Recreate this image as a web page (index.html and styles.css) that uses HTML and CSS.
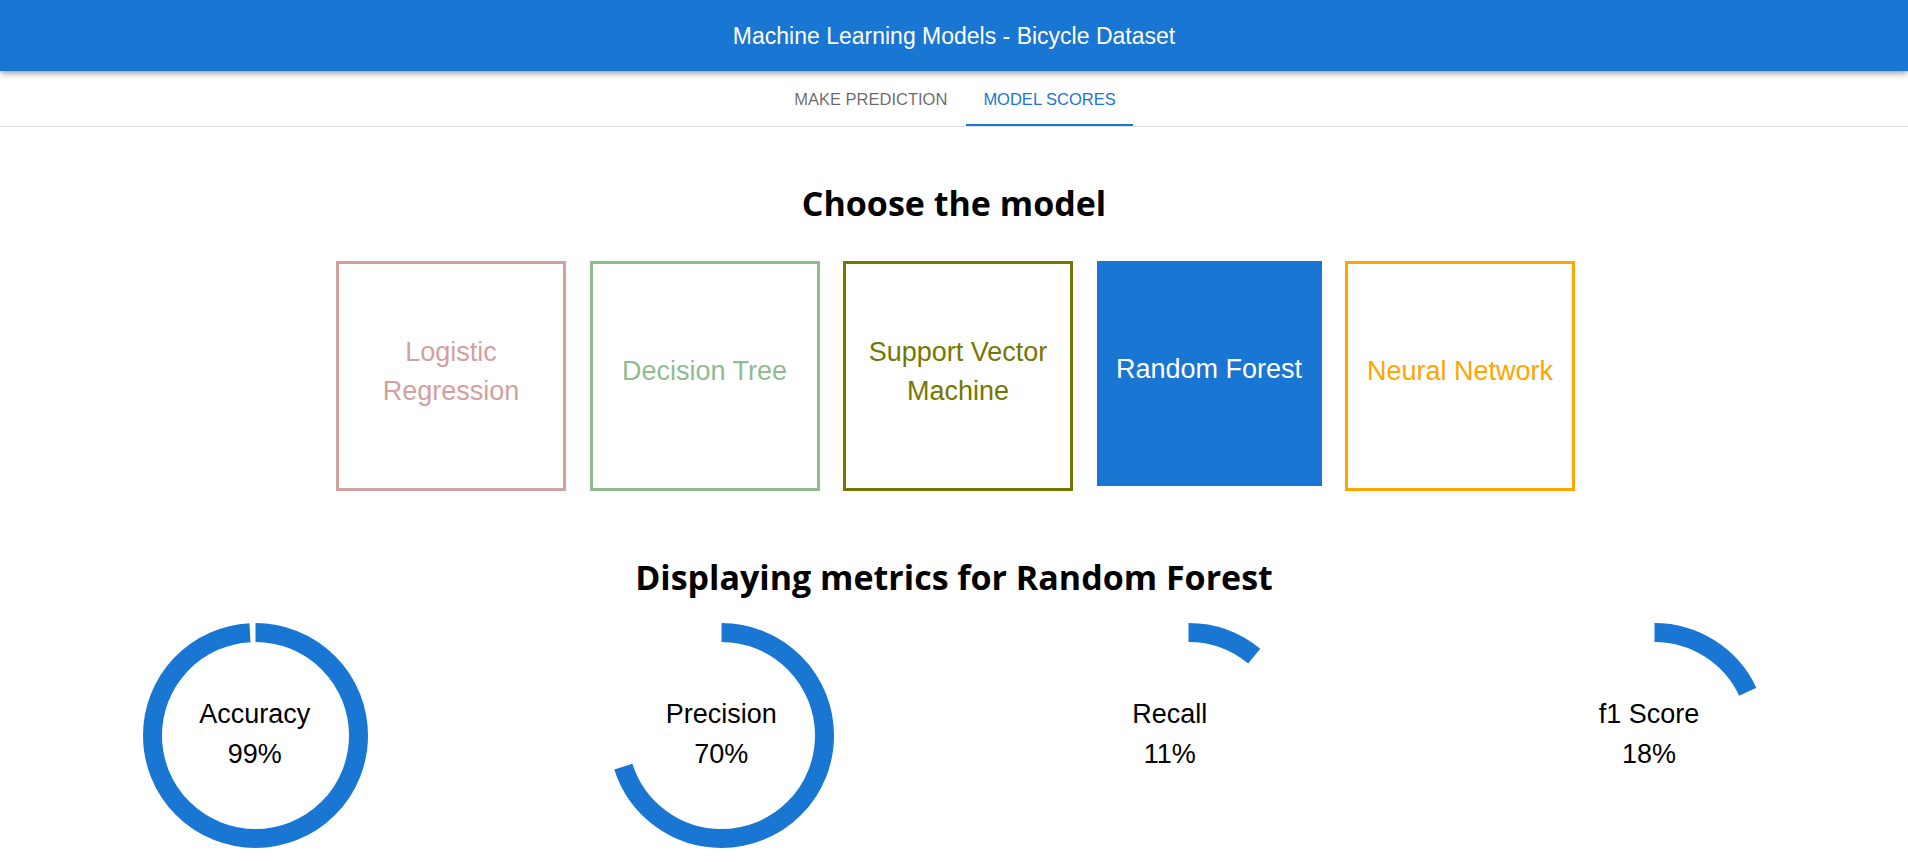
FILE: index.html
```html
<!DOCTYPE html>
<html lang="en">
<head>
<meta charset="utf-8">
<title>Machine Learning Models - Bicycle Dataset</title>
<link rel="stylesheet" href="styles.css">
</head>
<body>
<header class="appbar">
  <div class="appbar-title">Machine Learning Models - Bicycle Dataset</div>
</header>
<nav class="tabs">
  <div class="tab">MAKE PREDICTION</div>
  <div class="tab tab-active">MODEL SCORES</div>
</nav>
<main class="content">
  <h1 class="heading heading-choose">Choose the model</h1>
  <div class="models">
    <div class="model model-logistic">Logistic Regression</div>
    <div class="model model-tree">Decision Tree</div>
    <div class="model model-svm">Support Vector Machine</div>
    <div class="model model-active">Random Forest</div>
    <div class="model model-nn">Neural Network</div>
  </div>
  <h1 class="heading heading-metrics">Displaying metrics for Random Forest</h1>
  <div class="metrics">
    <div class="metric">
      <div class="gauge">
        <svg class="gauge-svg" width="225" height="225" viewBox="0 0 225 225">
          <circle class="gauge-arc" cx="112.5" cy="112.5" r="103" stroke-dasharray="640.7 1000" transform="rotate(-90 112.5 112.5)"/>
        </svg>
        <div class="gauge-label"><div>Accuracy</div><div>99%</div></div>
      </div>
    </div>
    <div class="metric">
      <div class="gauge">
        <svg class="gauge-svg" width="225" height="225" viewBox="0 0 225 225">
          <circle class="gauge-arc" cx="112.5" cy="112.5" r="103" stroke-dasharray="453.0 1000" transform="rotate(-90 112.5 112.5)"/>
        </svg>
        <div class="gauge-label"><div>Precision</div><div>70%</div></div>
      </div>
    </div>
    <div class="metric">
      <div class="gauge">
        <svg class="gauge-svg" width="225" height="225" viewBox="0 0 225 225">
          <circle class="gauge-arc" cx="112.5" cy="112.5" r="103" stroke-dasharray="71.2 1000" transform="rotate(-90 112.5 112.5)"/>
        </svg>
        <div class="gauge-label"><div>Recall</div><div>11%</div></div>
      </div>
    </div>
    <div class="metric">
      <div class="gauge">
        <svg class="gauge-svg" width="225" height="225" viewBox="0 0 225 225">
          <circle class="gauge-arc" cx="112.5" cy="112.5" r="103" stroke-dasharray="116.5 1000" transform="rotate(-90 112.5 112.5)"/>
        </svg>
        <div class="gauge-label"><div>f1 Score</div><div>18%</div></div>
      </div>
    </div>
  </div>
</main>
</body>
</html>
```
FILE: styles.css
```css
html, body {
  margin: 0;
  padding: 0;
  background: #ffffff;
}

body {
  font-family: "Liberation Sans", Arial, sans-serif;
  color: #000000;
  overflow: hidden;
}

.appbar {
  position: relative;
  z-index: 2;
  height: 71px;
  background: #1976d2;
  display: flex;
  align-items: center;
  justify-content: center;
  box-shadow: 0 2px 4px -1px rgba(0,0,0,0.2), 0 4px 5px 0 rgba(0,0,0,0.14), 0 1px 10px 0 rgba(0,0,0,0.12);
}

.appbar-title {
  color: #ffffff;
  font-size: 23px;
  line-height: 30px;
}

.tabs {
  display: flex;
  justify-content: center;
  height: 55px;
  border-bottom: 1px solid #e0e0e0;
  background: #ffffff;
  padding-left: 2px;
}

.tab {
  display: flex;
  align-items: center;
  padding: 1px 17px 0;
  font-size: 16.5px;
  color: rgba(0,0,0,0.6);
  box-sizing: border-box;
  height: 55px;
}

.tab-active {
  color: #1976d2;
  box-shadow: inset 0 -2px 0 #1976d2;
  margin-left: 2px;
}

.content {
  display: flex;
  flex-direction: column;
  align-items: stretch;
}

.heading {
  margin: 0;
  text-align: center;
  font-family: "Open Sans", "Noto Sans", sans-serif;
  font-weight: 700;
  font-size: 34px;
  line-height: 44px;
}

.heading-choose {
  margin-top: 54px;
}

.models {
  margin-top: 36px;
  display: flex;
  justify-content: center;
  align-items: flex-start;
  gap: 23.5px;
  padding-left: 3px;
}

.model {
  box-sizing: border-box;
  width: 230px;
  height: 230px;
  border: 3px solid;
  display: flex;
  align-items: center;
  justify-content: center;
  text-align: center;
  padding-bottom: 9px;
  font-size: 27px;
  line-height: 39px;
}

.model-logistic {
  color: #d3a0a0;
  border-color: #d3a0a0;
}

.model-tree {
  color: #8fbc8f;
  border-color: #8fbc8f;
}

.model-svm {
  color: #767600;
  border-color: #767600;
}

.model-active {
  width: 225px;
  height: 225px;
  border: none;
  background: #1976d2;
  color: #ffffff;
}

.model-nn {
  color: #ffa500;
  border-color: #ffa500;
}

.heading-metrics {
  margin-top: 64px;
}

.metrics {
  margin-top: 24px;
  display: grid;
  grid-template-columns: repeat(4, 1fr);
  padding: 0 20px 0 22px;
}

.metric {
  display: flex;
  justify-content: center;
}

.gauge {
  position: relative;
  width: 225px;
  height: 225px;
}

.gauge-svg {
  display: block;
}

.gauge-arc {
  fill: none;
  stroke: #1976d2;
  stroke-width: 19;
  stroke-linecap: butt;
}

.gauge-label {
  position: absolute;
  top: calc(50% - 2px);
  left: calc(50% - 56px);
  transform: translateY(-50%);
  white-space: nowrap;
  text-align: center;
  font-size: 27px;
  line-height: 40px;
  color: #000000;
}
```
